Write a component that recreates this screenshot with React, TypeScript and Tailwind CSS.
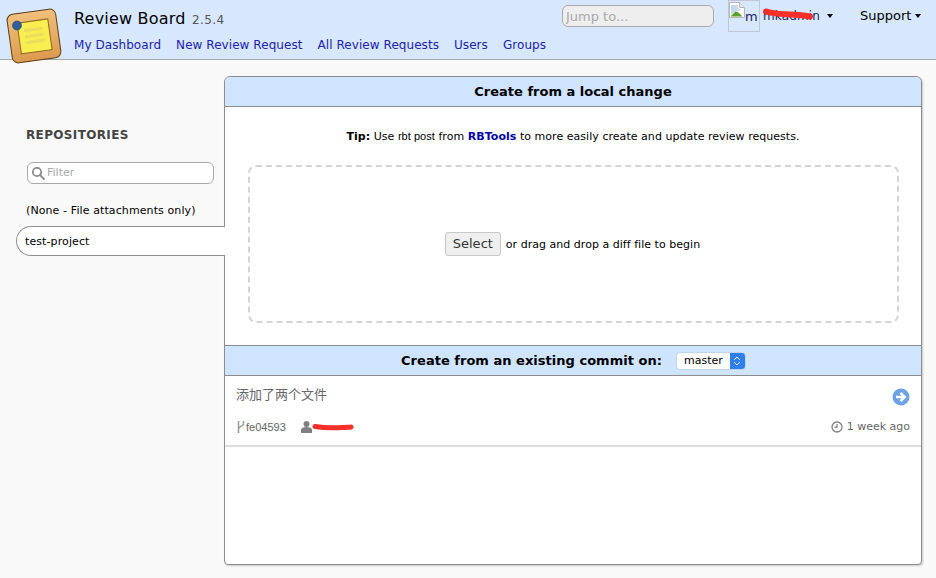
import { ChevronsUpDown } from 'lucide-react'

function Logo() {
  return (
    <svg width="58" height="58" viewBox="0 0 58 58" className="absolute left-[5px] top-[7px]">
      <defs>
        <linearGradient id="wood" x1="0" y1="0" x2="0" y2="1">
          <stop offset="0" stopColor="#f0c07c" />
          <stop offset="1" stopColor="#dc9a4e" />
        </linearGradient>
      </defs>
      <rect x="4.5" y="4.5" width="49" height="49" rx="6" transform="rotate(-8 29 29)" fill="url(#wood)" stroke="#5c3d16" strokeWidth="1" />
      <rect x="14" y="14" width="31" height="31" transform="rotate(-8 29 29)" fill="#f9ee4f" stroke="#8a6a20" strokeWidth="1" />
      <g transform="rotate(-8 29 29)" fill="#ecdc5c">
        <rect x="20" y="21" width="19" height="3" />
        <rect x="20" y="27" width="19" height="3" />
        <rect x="20" y="33" width="19" height="3" />
      </g>
      <circle cx="12" cy="18.5" r="4.5" fill="#2f5f9e" stroke="#1d3f70" strokeWidth="0.6" />
    </svg>
  )
}

function BrokenImage() {
  return (
    <svg width="16" height="16" viewBox="0 0 16 16" className="shrink-0">
      <path d="M.5.5h10l5 5v10H.5z" fill="#fff" stroke="#b5b5b5" strokeWidth="1" />
      <path d="M10.5.5v5h5" fill="#e8e8e8" stroke="#b5b5b5" strokeWidth="1" />
      <path d="M2 3h7v3l3 2-6 2-4 3z" fill="#c6d8f2" />
      <path d="M1.5 14.5l5-5 3 1 4 4z" fill="#5aa02c" />
    </svg>
  )
}

function Caret() {
  return <span className="inline-block mb-[1px] border-x-[3.5px] border-t-[4px] border-x-transparent border-t-black" />
}

export default function App() {
  return (
    <div className="relative w-[936px] h-[578px] overflow-hidden bg-[#f9f9f9] font-['DejaVu_Sans','Noto_Sans_CJK_SC',sans-serif] text-[11px] text-black">
      <header className="flex h-[60px] border-b border-[#a9a9a9] bg-[#d6e7fe] pl-[74px]">
        <div className="flex flex-col w-[488px]">
          <h1 className="mt-[8px] text-[16px] leading-[22px] tracking-[0.2px]">
            Review Board <span className="ml-[1px] text-[12px] text-[#555] tracking-[0.4px]">2.5.4</span>
          </h1>
          <nav className="mt-[6px] flex gap-[15px] text-[12px] leading-[16px] tracking-[0.06px] text-[#2222aa]">
            <a>My Dashboard</a>
            <a>New Review Request</a>
            <a>All Review Requests</a>
            <a>Users</a>
            <a>Groups</a>
          </nav>
        </div>
        <input
          placeholder="Jump to..."
          className="mt-[5px] h-[22px] w-[152px] rounded-md border border-[#a9a9a9] bg-[#eeeeee] px-[3px] text-[13px] placeholder:text-[#a9a9a9]"
        />
        <div className="ml-[14px] flex h-[32px] w-[32px] items-start border border-[#bfc8d4] pt-[1px]">
          <BrokenImage />
          <span className="mt-[7px] text-[13px] leading-[16px] text-[#222266]">m</span>
        </div>
        <div className="relative mt-[8px] ml-[3px] flex h-[16px] w-[97px] items-center gap-[7px] text-[12px] tracking-[0.15px] text-[#222266]">
          <span>mkadmin</span>
          <Caret />
          <svg width="50" height="14" viewBox="0 0 50 14" className="absolute left-0 top-0">
            <path d="M3 3.5 C 10 6, 20 6, 28 6.5 S 40 7, 47 8.5" fill="none" stroke="#f5302a" strokeWidth="6" strokeLinecap="round" />
          </svg>
        </div>
        <div className="mt-[8px] flex h-[16px] items-center gap-[4px] text-[13px]">
          Support
          <Caret />
        </div>
      </header>
      <Logo />

      <main className="flex">
        <aside className="w-[224px] shrink-0 pt-[68px]">
          <h2 className="pl-[26px] text-[12px] leading-[15px] font-bold tracking-[0.35px] text-[#444]">REPOSITORIES</h2>
          <div className="ml-[27px] mt-[19px] flex h-[22px] w-[187px] items-center gap-[2px] rounded-md border border-[#a9a9a9] bg-white pl-[3px] text-[11px] text-[#aaaaaa]">
            <svg width="14" height="14" viewBox="0 0 14 14" fill="none" stroke="#8a8a8a" strokeWidth="1.8">
              <circle cx="6" cy="6" r="4.2" />
              <path d="M9 9l4 4" strokeLinecap="round" />
            </svg>
            Filter
          </div>
          <p className="mt-[20px] pl-[26px] leading-[14px] tracking-[0.1px]">(None - File attachments only)</p>
          <div className="relative z-10 mt-[8px] ml-[16px] flex h-[30px] w-[209px] items-center rounded-l-[15px] border border-r-0 border-[#8d8d8d] bg-white pl-[8px] pt-[2px] tracking-[0.1px]">
            test-project
          </div>
        </aside>

        <section className="mt-[16px] flex h-[489px] w-[698px] flex-col rounded-t-md rounded-b-sm border border-[#8d8d8d] bg-white shadow-[1px_1px_2px_rgba(0,0,0,0.2)]">
          <div className="flex h-[30px] shrink-0 items-center justify-center rounded-t-md border-b border-[#8d8d8d] bg-[#cfe4fe] pt-[1px] text-[13px] font-bold">
            Create from a local change
          </div>
          <p className="mt-[22px] text-center leading-[14px] tracking-[0.04px]">
            <b>Tip:</b> Use <span className="font-['Liberation_Sans'] text-[11px]">rbt post</span> from <b className="text-[#0000aa]">RBTools</b> to more easily create and update review requests.
          </p>
          <div className="ml-[23px] mr-[22px] mt-[21px] flex h-[158px] items-center justify-center rounded-lg border-2 border-dashed border-[#d4d4d4] pr-[2px] tracking-[0.03px]">
            <button className="mr-[5px] h-[24px] w-[56px] rounded-[3px] border border-[#c8c8c8] bg-[#efefef] text-[13px] text-[#333]">Select</button>
            <span className="pt-[2px]">or drag and drop a diff file to begin</span>
          </div>
          <div className="mt-[22px] flex h-[31px] shrink-0 items-center justify-center gap-[14px] border-y border-[#8d8d8d] bg-[#cfe4fe] pl-[1px] pt-[1px] text-[13px] font-bold tracking-[0.02px]">
            Create from an existing commit on:
            <div className="flex h-[18px] w-[70px] items-center overflow-hidden rounded-[4px] border border-[#c4d4e8] bg-white text-[11px] font-normal">
              <span className="flex-1 pl-[7px]">master</span>
              <span className="flex h-full w-[15px] items-center justify-center bg-[#2f80ee] text-white">
                <ChevronsUpDown size={12} strokeWidth={2} />
              </span>
            </div>
          </div>
          <div className="h-[71px] shrink-0 border-b-2 border-[#dddddd] px-[11px] text-[#666]">
            <div className="flex items-start justify-between pt-[10px]">
              <span className="text-[13px] leading-[18px]">添加了两个文件</span>
              <svg width="18" height="18" viewBox="0 0 18 18" className="mt-[2px]">
                <circle cx="9" cy="9" r="8.5" fill="#6da3e6" />
                <path d="M4 9h8M8.5 4.8L12.7 9l-4.2 4.2" fill="none" stroke="#fff" strokeWidth="2.6" />
              </svg>
            </div>
            <div className="mt-[14px] flex items-center leading-[14px]">
              <svg width="9" height="14" viewBox="0 0 9 14" className="mr-[1px]" fill="none" stroke="#999" strokeWidth="1.5">
                <path d="M2.5 1v12M7.5 1v3c0 2-5 2.5-5 5" />
              </svg>
              <span className="font-['Liberation_Sans']">fe04593</span>
              <span className="ml-[15px] flex items-center">
                <svg width="11" height="12" viewBox="0 0 11 12" fill="#808080">
                  <circle cx="5.5" cy="3" r="3" />
                  <path d="M0 12V9c0-2 2-3 5.5-3S11 7 11 9v3z" />
                </svg>
                <svg width="42" height="10" viewBox="0 0 42 10">
                  <path d="M3 4.5 C 12 6, 22 6, 30 5.5 S 38 5.5, 39 5" fill="none" stroke="#f5302a" strokeWidth="5" strokeLinecap="round" />
                </svg>
              </span>
              <span className="ml-auto flex items-center gap-[4px] text-[#666]">
                <svg width="12" height="12" viewBox="0 0 12 12" fill="none" stroke="#808080" strokeWidth="1.3">
                  <circle cx="6" cy="6" r="5" />
                  <path d="M6 3v3.2H3.5" />
                </svg>
                1 week ago
              </span>
            </div>
          </div>
        </section>
      </main>
    </div>
  )
}
